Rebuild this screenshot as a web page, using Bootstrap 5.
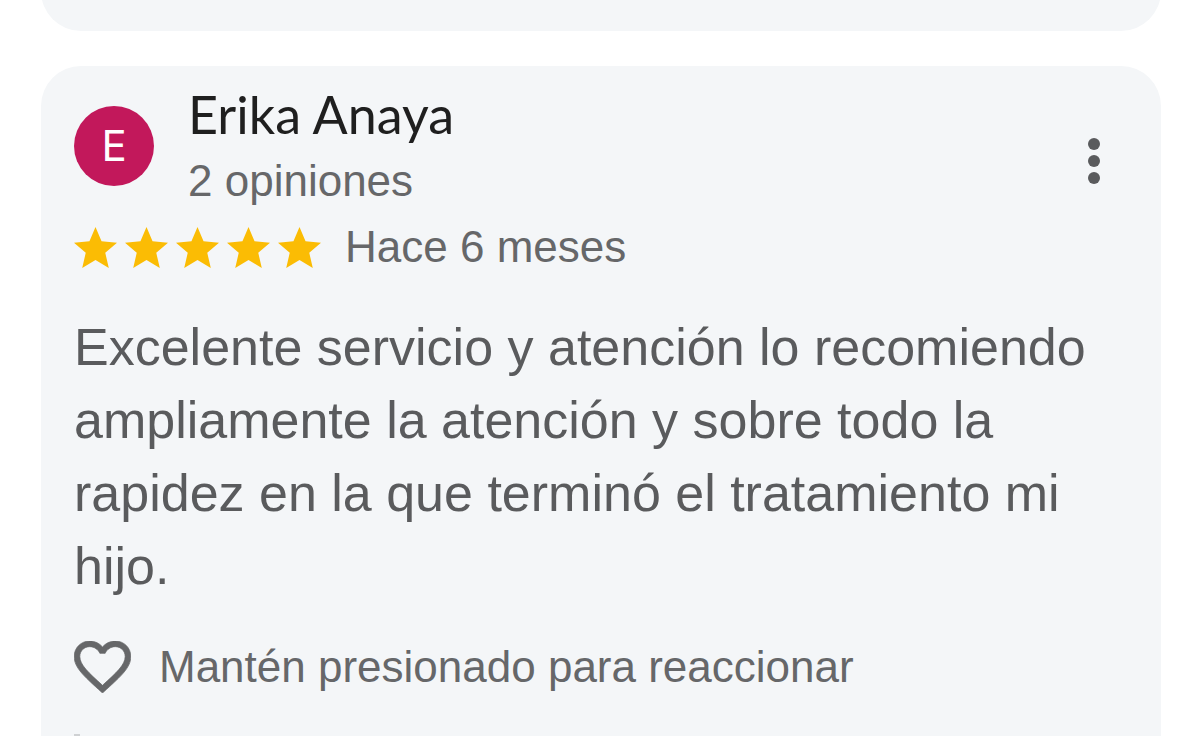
<!DOCTYPE html>
<html lang="es">
<head>
<meta charset="utf-8">
<meta name="viewport" content="width=device-width, initial-scale=1">
<title>Opiniones</title>
<link href="https://cdn.jsdelivr.net/npm/bootstrap@5.3.0/dist/css/bootstrap.min.css" rel="stylesheet">
<style>
  body { font-family: "Liberation Sans", Arial, sans-serif; color: #5a5b5d; background: #fff; }
  .reviews { padding: 0 39px 0 41px; gap: 35px; min-height: 100vh; }
  .review { background: #f4f6f8; border-radius: 40px; padding: 24px 33px 0; }
  .review-prev { margin-top: -32px; padding-bottom: 39px; border-top-left-radius: 0; border-top-right-radius: 0; }
  .review-open { border-bottom-left-radius: 0; border-bottom-right-radius: 0; }
  .person { gap: 34px; }
  .avatar { width: 80px; height: 80px; background: #c2185b; color: #fff; font: 42px/80px Inter, sans-serif; margin-top: 16px; }
  .author { font: 400 52px/48px Lato, sans-serif; color: #1f1f1f; }
  .meta { font-size: 44px; line-height: 56px; color: #666769; }
  .count { margin-top: 15px; }
  .menu-btn { color: #5a5b5d; width: 44px; margin: 44px 12px 0 0; }
  .stars { gap: 8px; color: #fbbc04; }
  .rating { gap: 24px; margin-top: 10px; }
  .comment { font-size: 52px; line-height: 73px; margin-top: 36px; }
  .react { gap: 28px; color: #666769; margin-top: 36px; }
  .reply-mark { width: 6px; height: 2px; background: #cfd1d3; }
</style>
<script src="https://cdn.jsdelivr.net/npm/bootstrap@5.3.0/dist/js/bootstrap.bundle.min.js"></script>
</head>
<body>
<svg class="d-none" aria-hidden="true">
  <symbol id="star" viewBox="2 2 20 19"><path fill="currentColor" d="M12 17.27 18.18 21l-1.64-7.03L22 9.24l-7.19-.61L12 2 9.19 8.63 2 9.24l5.46 4.73L5.82 21z"/></symbol>
</svg>
<main class="reviews d-flex flex-column">
  <div class="review review-prev"></div>
  <article class="review review-open flex-grow-1 d-flex flex-column">
    <header class="d-flex align-items-start justify-content-between">
      <div class="person d-flex align-items-start">
        <div class="avatar rounded-circle text-center flex-shrink-0">E</div>
        <div>
          <h2 class="author mb-0">Erika Anaya</h2>
          <p class="meta count mb-0">2 opiniones</p>
        </div>
      </div>
      <button type="button" class="menu-btn btn p-0 border-0" aria-label="Más opciones">
        <svg class="d-block mx-auto" width="12" height="54" viewBox="0 0 12 54" fill="currentColor"><circle cx="6" cy="10" r="6"/><circle cx="6" cy="27" r="6"/><circle cx="6" cy="44" r="6"/></svg>
      </button>
    </header>
    <div class="rating d-flex align-items-center">
      <div class="stars d-flex" role="img" aria-label="5 estrellas">
        <svg width="43" height="41"><use href="#star"/></svg>
        <svg width="43" height="41"><use href="#star"/></svg>
        <svg width="43" height="41"><use href="#star"/></svg>
        <svg width="43" height="41"><use href="#star"/></svg>
        <svg width="43" height="41"><use href="#star"/></svg>
      </div>
      <span class="meta">Hace 6 meses</span>
    </div>
    <p class="comment mb-0">Excelente servicio y atención lo recomiendo ampliamente la atención y sobre todo la rapidez en la que terminó el tratamiento mi hijo.</p>
    <button type="button" class="react btn p-0 border-0 d-flex align-items-center text-start">
      <svg width="57" height="52" viewBox="2 3 20 18.35" fill="currentColor"><path stroke="currentColor" stroke-width=".25" d="M16.5 3c-1.74 0-3.41.81-4.5 2.09C10.91 3.81 9.24 3 7.5 3 4.42 3 2 5.42 2 8.5c0 3.78 3.4 6.86 8.55 11.54L12 21.35l1.45-1.32C18.6 15.36 22 12.28 22 8.5 22 5.42 19.58 3 16.5 3zm-4.4 15.55-.1.1-.1-.1C7.14 14.24 4 11.39 4 8.5 4 6.5 5.5 5 7.5 5c1.54 0 3.04.99 3.57 2.36h1.87C13.46 5.99 14.96 5 16.5 5c2 0 3.5 1.5 3.5 3.5 0 2.89-3.14 5.74-7.9 10.05z"/></svg>
      <span class="meta">Mantén presionado para reaccionar</span>
    </button>
    <div class="reply-mark mt-auto"></div>
  </article>
</main>
</body>
</html>
